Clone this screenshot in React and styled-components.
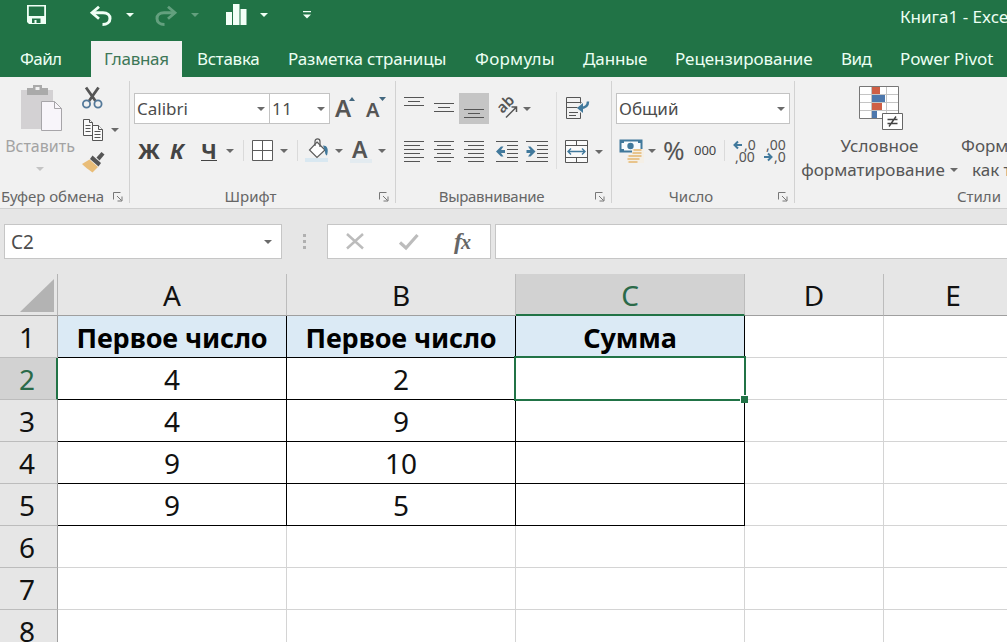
import React from "react";
import styled, { createGlobalStyle, css } from "styled-components";

const green = "#217346";
const blue = "#41799c";

const GlobalStyle = createGlobalStyle`
  * {
    box-sizing: border-box;
  }
  body {
    margin: 0;
    overflow: hidden;
    font-family: "Noto Sans", "Open Sans", sans-serif;
  }
  svg {
    display: block;
    flex: none;
    overflow: visible;
  }
`;

const Window = styled.div`
  width: 1007px;
  height: 642px;
  overflow: hidden;
  display: flex;
  flex-direction: column;
  background: #e6e6e6;
`;

const TitleBar = styled.header`
  height: 41px;
  flex: none;
  display: flex;
  align-items: flex-start;
  padding-left: 26px;
  background: ${green};
  color: #ecfff3;
`;

const QuickButton = styled.div`
  width: ${(props) => props.$w}px;
  padding-top: ${(props) => props.$top || 0}px;
  flex: none;
  opacity: ${(props) => (props.$disabled ? 0.32 : 1)};
`;

const BookName = styled.div`
  margin-left: auto;
  width: 107px;
  flex: none;
  overflow: hidden;
  white-space: nowrap;
  font-size: 17px;
  line-height: 33px;
`;

const Tabs = styled.nav`
  height: 36px;
  flex: none;
  display: grid;
  grid-template-columns: 91px 91px 91px 187px 108px 92px 166px 59px 122px;
  background: ${green};
`;

const Tab = styled.div`
  padding-left: ${(props) => props.$pad || 15}px;
  font-size: 17px;
  line-height: 36px;
  letter-spacing: ${(props) => props.$ls || 0}px;
  white-space: nowrap;
  color: #ecfff3;
  ${(props) =>
    props.$active &&
    css`
      background: #f1f1f1;
      color: #3d7757;
    `}
`;

const Ribbon = styled.section`
  height: 132px;
  flex: none;
  display: flex;
  background: #f1f1f1;
  border-bottom: 1px solid #cfcfcf;
`;

const Group = styled.div`
  width: ${(props) => props.$w}px;
  flex: none;
  display: grid;
  grid-template-rows: 108px 22px;
`;

const GroupLine = styled.div`
  width: 1px;
  height: 122px;
  margin-top: 4px;
  flex: none;
  background: #d2d2d2;
`;

const GroupFooter = styled.div`
  display: flex;
  align-items: center;
`;

const GroupLabel = styled.div`
  flex: 1;
  text-align: center;
  font-size: 15px;
  line-height: 22px;
  letter-spacing: ${(props) => props.$ls || 0}px;
  white-space: nowrap;
  color: #666;
`;

const LauncherSlot = styled.div`
  width: 24px;
  padding: 1px 0 0 8px;
`;

const ToolRows = styled.div`
  display: flex;
  flex-direction: column;
  padding-top: 16px;
`;

const ToolRow = styled.div`
  display: flex;
  align-items: center;
  height: 31px;
  margin-top: ${(props) => props.$mt || 0}px;
  padding-left: ${(props) => props.$pad || 0}px;
`;

const Tool = styled.div`
  width: ${(props) => props.$w}px;
  height: 31px;
  flex: none;
  display: flex;
  align-items: center;
  background: ${(props) => (props.$pressed ? "#c5c5c5" : "transparent")};
  padding-left: ${(props) => props.$pad || 0}px;
`;

const Letter = styled.span`
  font-size: 22px;
  line-height: 31px;
  font-weight: 700;
  color: #444;
  font-style: ${(props) => (props.$italic ? "italic" : "normal")};
  ${(props) =>
    props.$underline &&
    css`
      line-height: 20px;
      border-bottom: 1px solid #444;
    `}
`;

const FieldText = styled.span`
  flex: 1;
  font-size: ${(props) => props.$size || 17}px;
  letter-spacing: ${(props) => props.$ls || 0}px;
  color: #4c4c4c;
`;

const Field = styled.div`
  width: ${(props) => props.$w}px;
  height: 31px;
  flex: none;
  display: flex;
  align-items: center;
  padding: 0 4px 0 2px;
  background: #fff;
  border: 1px solid #c3c3c3;
  & + & {
    margin-left: -1px;
  }
`;

const ToolLine = styled.div`
  width: 1px;
  height: 21px;
  flex: none;
  background: #dadada;
`;

const PercentText = styled.span`
  font-size: 26px;
  line-height: 31px;
  color: #555;
`;

const ThousandText = styled.span`
  font-size: 13px;
  line-height: 31px;
  color: #444;
`;

const ClipboardBody = styled.div`
  display: grid;
  grid-template-columns: 82px 47px;
`;

const PasteButton = styled.div`
  display: flex;
  flex-direction: column;
  align-items: center;
  padding: 8px 0 0 1px;
  color: #a3a3a3;
`;

const PasteText = styled.div`
  font-size: 16px;
  line-height: 22px;
  margin-top: 3px;
  margin-right: 3px;
`;

const PasteCaret = styled.div`
  margin: 10px 3px 0 0;
`;

const ClipboardTools = styled.div`
  display: grid;
  grid-template-rows: 41px 24px 41px;
`;

const ClipboardRow = styled.div`
  display: flex;
  align-items: center;
  gap: 8px;
`;

const AlignBody = styled.div`
  display: grid;
  grid-template-columns: 160px 1px 1fr;
`;

const AlignLine = styled.div`
  height: 77px;
  margin-top: 15px;
  background: #dedede;
`;

const StyleButtons = styled.div`
  display: grid;
  grid-template-columns: 166px 150px;
`;

const BigButton = styled.div`
  display: flex;
  flex-direction: column;
  align-items: ${(props) => (props.$left ? "flex-start" : "center")};
  padding: 9px 0 0 ${(props) => (props.$left ? 0 : 3)}px;
  font-size: 17px;
  line-height: 24px;
  color: #565656;
  white-space: nowrap;
`;

const BigIcon = styled.div`
  height: 48px;
  padding-left: 3px;
`;

const BigCaption = styled.div`
  display: flex;
  align-items: center;
  gap: 5px;
  letter-spacing: ${(props) => props.$ls || 0}px;
  padding-left: ${(props) => props.$pad || 0}px;
`;

const FormulaBar = styled.section`
  height: 65px;
  flex: none;
  display: flex;
  align-items: flex-start;
  padding: 15px 0 0 4px;
`;

const NameBox = styled.div`
  width: 278px;
  height: 35px;
  flex: none;
  display: flex;
  align-items: center;
  padding: 0 9px 0 6px;
  background: #fff;
  border: 1px solid #c6c6c6;
`;

const Grip = styled.div`
  width: 45px;
  height: 35px;
  flex: none;
  display: flex;
  flex-direction: column;
  align-items: center;
  justify-content: center;
  gap: 3px;
  padding-right: 1px;
`;

const GripDot = styled.div`
  width: 3px;
  height: 3px;
  background: #b0b0b0;
`;

const FormulaButtons = styled.div`
  width: 164px;
  height: 35px;
  flex: none;
  display: flex;
  align-items: center;
  padding-left: 18px;
  background: #fff;
  border: 1px solid #c6c6c6;
`;

const FormulaInput = styled.div`
  width: 520px;
  height: 35px;
  flex: none;
  margin-left: 4px;
  background: #fff;
  border: 1px solid #c6c6c6;
`;

const FxText = styled.span`
  font: italic 700 24px/30px "Liberation Serif", serif;
  letter-spacing: -1px;
  color: #666;
  small {
    font-size: 20px;
  }
`;

const Sheet = styled.main`
  display: grid;
  grid-template-columns: 58px 229px 229px 229px 139px 139px;
  grid-auto-rows: 42px;
  background: #fff;
  font-size: 28px;
  line-height: 43px;
  text-align: center;
  color: #111;
`;

const Corner = styled.div`
  display: flex;
  justify-content: flex-end;
  padding: 5px 3px 0 0;
  background: #e6e6e6;
  border-right: 1px solid #b4b4b4;
  border-bottom: 1px solid #9f9f9f;
`;

const ColumnHead = styled.div`
  background: #e6e6e6;
  border-right: 1px solid #bcbcbc;
  border-bottom: 1px solid #9f9f9f;
  line-height: 42px;
  ${(props) =>
    props.$selected &&
    css`
      background: #d2d2d2;
      border-bottom: 2px solid ${green};
      color: #2b6a49;
    `}
`;

const RowHead = styled.div`
  background: #e6e6e6;
  border-right: 1px solid #9f9f9f;
  border-bottom: 1px solid #bcbcbc;
  padding-right: 3px;
  ${(props) =>
    props.$selected &&
    css`
      background: #d2d2d2;
      border-right: 2px solid ${green};
      padding-right: 2px;
      color: #2b6a49;
    `}
`;

const Cell = styled.div`
  position: relative;
  border-right: 1px solid ${(props) => (props.$table ? "#000" : "#d4d4d4")};
  border-bottom: 1px solid ${(props) => (props.$table ? "#000" : "#d4d4d4")};
  ${(props) =>
    props.$head &&
    css`
      background: #dbeaf5;
      color: #000;
      font-size: 27px;
      font-weight: 700;
      letter-spacing: -0.1px;
    `}
`;

const Selection = styled.div`
  position: absolute;
  left: -2px;
  top: -2px;
  width: 232px;
  height: 45px;
  border: 2px solid ${green};
  z-index: 1;
`;

const FillHandle = styled.div`
  position: absolute;
  right: -4px;
  bottom: -4px;
  width: 8px;
  height: 8px;
  background: ${green};
  border: solid #fff;
  border-width: 1px 0 0 1px;
`;

const Caret = ({ color = "#6a6a6a" }) => (
  <svg width="8" height="4" viewBox="0 0 8 4">
    <path d="M0 0h8L4 4z" fill={color} />
  </svg>
);

const Launcher = () => (
  <svg width="10" height="10" viewBox="0 0 10 10" fill="none" stroke="#777">
    <path d="M.5 7.5v-7h7M4 4l4.5 4.5M9 4.5V9H4.5" />
  </svg>
);

const SaveIcon = () => (
  <svg width="20" height="20" viewBox="0 0 20 20">
    <path
      d="M1 0h19v19H3l-2-2zM2.800 1.500v9.500h15.400V1.500zM6 13.500V18h2.500v-3h2v3h4v-4.500z"
      fill="#effff5"
      fillRule="evenodd"
    />
  </svg>
);

const UndoIcon = ({ flip }) => (
  <svg width="22" height="20" viewBox="0 0 22 20" fill="none" stroke="#effff5">
    <g transform={flip ? "translate(22 0) scale(-1 1)" : undefined}>
      <path d="M9 .8L2 6.8l7 6" strokeWidth="2.8" />
      <path d="M2.5 6.8H13c4.500 0 7 2.400 7 5.600 0 3.800-3 6-7.500 6" strokeWidth="3" />
    </g>
  </svg>
);

const BarsIcon = () => (
  <svg width="21" height="21" viewBox="0 0 21 21" fill="#f3fff7">
    <path d="M0 8h6v13H0zM7 0h6.500v21H7zM14.500 5h6v16h-6z" />
  </svg>
);

const CustomizeIcon = () => (
  <svg width="8" height="8" viewBox="0 0 8 8" fill="#effff5">
    <path d="M0 0h8v1.200H0zM0 3.500h8L4 7.500z" />
  </svg>
);

const PasteIcon = () => (
  <svg width="42" height="47" viewBox="0 0 42 47">
    <path d="M0 5h32v39H0z" fill="#d3d1d3" />
    <path d="M6 3h6V0h9v3h6v7H6zM14.500 2v3h4V2z" fill="#aaa" fillRule="evenodd" />
    <path d="M20.500 16.500h13l7 7v22h-20z" fill="#f8f5fa" stroke="#a7a5a9" />
    <path d="M33.500 16.500v7h7" fill="none" stroke="#a7a5a9" />
  </svg>
);

const CutIcon = () => (
  <svg width="21" height="22" viewBox="0 0 21 22" fill="none">
    <path d="M4 .5L13.500 14M16.500 .5L7 14" stroke="#555" strokeWidth="2.800" />
    <circle cx="4.500" cy="17" r="3.600" stroke="#54799a" strokeWidth="1.800" />
    <circle cx="16" cy="17" r="3.600" stroke="#54799a" strokeWidth="1.800" />
  </svg>
);

const CopyIcon = () => (
  <svg width="21" height="22" viewBox="0 0 21 22" fill="#fafafa" stroke="#555">
    <path d="M1.500 .5h6l3 3v13h-9z" />
    <path d="M7.500 .5v3h3M3.500 6.500h5M3.500 9.500h5M3.500 12.500h5" />
    <path d="M10.500 6.500h6l4 4v11h-10z" />
    <path d="M16.500 6.500v4h4M12.500 12.500h6M12.500 15.500h6M12.500 18.500h6" />
  </svg>
);

const BrushIcon = () => (
  <svg width="23" height="21" viewBox="0 0 23 21">
    <path d="M14.500 5.500l5-5.500 3 2.500-5 6z" fill="#555" />
    <path d="M10.500 3.500l8.500 7.500-2.500 3.500L8 7z" fill="#555" />
    <path d="M7.500 7.500l8.500 7.500-5.500 5.500C7 18 3 15 0 12z" fill="#e9bd78" />
  </svg>
);

const FontSizeIcon = ({ shrink }) => (
  <svg width="22" height="25" viewBox="0 0 22 25">
    <text
      x={shrink ? 1 : 0}
      y="21"
      fontSize={shrink ? 20 : 24}
      fontWeight="600"
      fill="#555"
    >
      A
    </text>
    <path d={shrink ? "M14 1h7l-3.500 4z" : "M14 5h6l-3-4z"} fill="#42677f" />
  </svg>
);

const BordersIcon = () => (
  <svg width="22" height="22" viewBox="0 0 22 22" fill="#fff" stroke="#5b5b5b">
    <path d="M.5 .5h20v20H.5zM10.500 .5v20M.5 10.500h20" />
  </svg>
);

const FillIcon = () => (
  <svg width="23" height="25" viewBox="0 0 23 25" fill="none">
    <path d="M0 20h23v4H0z" fill="#d9e8f1" />
    <path
      d="M12 4l8 8-8 7.500-7.500-7.500z"
      fill="#fff"
      stroke="#5b5b5b"
      strokeWidth="1.200"
    />
    <path d="M10 8V3.500c0-3.500 5-3.500 5 0V9" stroke="#5b5b5b" strokeWidth="1.200" />
    <path d="M18 7.500c4 0 6 3 4 10-1.500-.5-2-2-2-4.500z" fill={blue} />
  </svg>
);

const FontColorIcon = () => (
  <svg width="22" height="25" viewBox="0 0 22 25">
    <path d="M0 21h22v4H0z" fill="#e3ebf0" />
    <text x="2" y="20" fontSize="23" fontWeight="600" fill="#555">
      A
    </text>
  </svg>
);

// each entry is [x1, x2] of one stroke
const lineSets = {
  outer: [[0, 20], [4, 16], [0, 20]],
  left: [[0, 20], [0, 16], [0, 20], [0, 16], [0, 20], [0, 16]],
  center: [[0, 20], [3, 17], [0, 20], [3, 17], [0, 20], [3, 17]],
  right: [[0, 20], [4, 20], [0, 20], [4, 20], [0, 20], [4, 20]],
};

const LinesIcon = ({ set, top = 0 }) => (
  <svg width="20" height="23" viewBox="0 0 20 23" stroke="#555">
    {lineSets[set].map(([a, b], i) => (
      <path key={i} d={`M${a} ${top + i * 4 + 0.5}H${b}`} />
    ))}
  </svg>
);

const IndentIcon = ({ increase }) => (
  <svg width="23" height="23" viewBox="0 0 23 23">
    <path
      d="M0 .5h22M11 4.500h11M11 8.500h11M11 12.500h11M11 16.500h11M0 20.500h22"
      stroke="#555"
    />
    <path
      d="M0 10.500L5 5.500h2.500L5 9h4v3H5l2.500 3.500H5z"
      fill={blue}
      transform={increase ? "translate(9.500 0) scale(-1 1)" : undefined}
    />
  </svg>
);

const OrientationIcon = () => (
  <svg width="22" height="23" viewBox="0 0 22 23">
    <text
      fontSize="15"
      fontWeight="600"
      fill="#555"
      transform="translate(5.500 17) rotate(-45)"
    >
      ab
    </text>
    <path
      d="M9 20.500L19 10.500M14.500 10h5v5"
      fill="none"
      stroke="#555"
      strokeWidth="1.500"
    />
  </svg>
);

const WrapIcon = () => (
  <svg width="24" height="23" viewBox="0 0 24 23" fill="none">
    <path d="M14.500 6.500v-6H.5v21h14v-6" stroke="#555" />
    <path d="M.5 5.500h15M.5 10.500h11M3 15.500h9M3 18.500h7" stroke="#555" />
    <path d="M22 4.500c0 4-2.500 6.500-8 6.500" stroke={blue} strokeWidth="2.500" />
    <path d="M11 11L17 6v10z" fill={blue} />
  </svg>
);

const MergeIcon = () => (
  <svg width="24" height="24" viewBox="0 0 24 24" fill="none">
    <path
      d="M.5 .5h22v22H.5zM.5 5.500h22M.5 17.500h22M11.500 .5v5M11.500 17.500v5"
      stroke="#555"
      fill="#fafafa"
    />
    <path
      d="M3 11.500h17M6 8.500l-3 3 3 3M17 8.500l3 3-3 3"
      stroke={blue}
      strokeWidth="1.400"
    />
  </svg>
);

const CurrencyIcon = () => (
  <svg width="25" height="24" viewBox="0 0 25 24" fill="none">
    <path d="M1.500 1.500h21v11h-21z" fill="#f8fbfd" stroke={blue} strokeWidth="2" />
    <circle cx="11.500" cy="7" r="3.200" fill={blue} />
    <path d="M1 1h4v3H1zM19 1h4v3h-4zM1 10h4v3H1z" fill={blue} />
    <path d="M13 10h12v14H8v-8h5z" fill="#f4efe6" />
    <path
      d="M14.500 11h8M13.500 14h9M9.500 17h13M8.500 20h12M9.500 23h9"
      stroke="#e8c48c"
      strokeWidth="1.800"
    />
  </svg>
);

const DecimalIcon = ({ decrease }) => (
  <svg width="23" height="26" viewBox="0 0 23 26">
    <g fontSize="14" fill="#555">
      <text x={decrease ? 3 : 11} y="12">
        {decrease ? ",00" : ",0"}
      </text>
      <text x={decrease ? 11 : 2} y="24">
        {decrease ? ",0" : ",00"}
      </text>
    </g>
    <path
      d="M9 0H1.500M5 -3.500L1.500 0L5 3.500"
      fill="none"
      stroke={blue}
      strokeWidth="2"
      transform={decrease ? "translate(10 19) scale(-1 1)" : "translate(0 7)"}
    />
  </svg>
);

const ConditionalIcon = () => (
  <svg width="45" height="45" viewBox="0 0 45 45">
    <path d="M.5 .5h39v32H.5z" fill="#fff" />
    <path
      d="M.5 8.500h39M.5 16.500h39M.5 24.500h39M12.500 .5v32M27.500 .5v32"
      stroke="#c4c4c4"
    />
    <path d="M13 1h8v7h-8zM13 17h10v7H13z" fill="#cf5f45" />
    <path d="M13 9h13v7H13zM13 25h5v7h-5z" fill="#4d78ad" />
    <path d="M.5 .5h39v32H.5z" fill="none" stroke="#777" />
    <path d="M23.500 27.500h20v16h-20z" fill="#fff" stroke="#666" />
    <path
      d="M28.500 33.500h10M28.500 37.500h10M37 30.500l-7 10"
      stroke="#444"
      strokeWidth="1.400"
    />
  </svg>
);

const CancelIcon = () => (
  <svg width="18" height="17" viewBox="0 0 18 17" stroke="#bcbcbc" strokeWidth="2.500">
    <path d="M1 1l16 14.500M17 1L1 15.500" />
  </svg>
);

const AcceptIcon = () => (
  <svg width="20" height="16" viewBox="0 0 20 16" fill="none">
    <path d="M1 8.500l6 5.500L18.500 1" stroke="#bcbcbc" strokeWidth="3.200" />
  </svg>
);

const tabs = [
  { name: "Файл", pad: 20, ls: -0.6 },
  { name: "Главная", pad: 13, ls: -0.3, active: true },
  { name: "Вставка", ls: -0.3 },
  { name: "Разметка страницы", ls: -0.15 },
  { name: "Формулы", ls: 0.25 },
  { name: "Данные", ls: -0.1 },
  { name: "Рецензирование", ls: -0.05 },
  { name: "Вид", ls: -0.6 },
  { name: "Power Pivot", ls: -0.1 },
];

const columns = ["A", "B", "C", "D", "E"];
const rows = [
  ["Первое число", "Первое число", "Сумма"],
  ["4", "2", ""],
  ["4", "9", ""],
  ["9", "10", ""],
  ["9", "5", ""],
  [],
  [],
  [],
];

const Footer = ({ children, ls }) => (
  <GroupFooter>
    <GroupLabel $ls={ls}>{children}</GroupLabel>
    <LauncherSlot>
      <Launcher />
    </LauncherSlot>
  </GroupFooter>
);

const ClipboardGroup = () => (
  <Group $w={129}>
    <ClipboardBody>
      <PasteButton>
        <PasteIcon />
        <PasteText>Вставить</PasteText>
        <PasteCaret>
          <Caret color="#c4c4c4" />
        </PasteCaret>
      </PasteButton>
      <ClipboardTools>
        <ClipboardRow>
          <CutIcon />
        </ClipboardRow>
        <ClipboardRow>
          <CopyIcon />
          <Caret />
        </ClipboardRow>
        <ClipboardRow>
          <BrushIcon />
        </ClipboardRow>
      </ClipboardTools>
    </ClipboardBody>
    <Footer ls={-0.05}>Буфер обмена</Footer>
  </Group>
);

const FontGroup = () => (
  <Group $w={265}>
    <ToolRows>
      <ToolRow $pad={4}>
        <Field $w={136}>
          <FieldText>Calibri</FieldText>
          <Caret />
        </Field>
        <Field $w={61}>
          <FieldText $size={17} $ls={0.5}>
            11
          </FieldText>
          <Caret />
        </Field>
        <Tool $w={30} $pad={5}>
          <FontSizeIcon />
        </Tool>
        <Tool $w={24} $pad={5}>
          <FontSizeIcon shrink />
        </Tool>
      </ToolRow>
      <ToolRow $mt={11} $pad={8}>
        <Tool $w={32}>
          <Letter>Ж</Letter>
        </Tool>
        <Tool $w={31}>
          <Letter $italic>К</Letter>
        </Tool>
        <Tool $w={25}>
          <Letter $underline>Ч</Letter>
        </Tool>
        <Tool $w={17}>
          <Caret />
        </Tool>
        <ToolLine />
        <Tool $w={36} $pad={8}>
          <BordersIcon />
        </Tool>
        <Tool $w={17}>
          <Caret />
        </Tool>
        <ToolLine />
        <Tool $w={37} $pad={7}>
          <FillIcon />
        </Tool>
        <Tool $w={15}>
          <Caret />
        </Tool>
        <Tool $w={28}>
          <FontColorIcon />
        </Tool>
        <Caret />
      </ToolRow>
    </ToolRows>
    <Footer>Шрифт</Footer>
  </Group>
);

const AlignGroup = () => (
  <Group $w={215}>
    <AlignBody>
      <ToolRows>
        <ToolRow $pad={8}>
          <Tool $w={30}>
            <LinesIcon set="outer" />
          </Tool>
          <Tool $w={25}>
            <LinesIcon set="outer" top={6} />
          </Tool>
          <Tool $w={30} $pad={5} $pressed>
            <LinesIcon set="outer" top={12} />
          </Tool>
          <Tool $w={34} $pad={8}>
            <OrientationIcon />
          </Tool>
          <Caret />
        </ToolRow>
        <ToolRow $mt={13} $pad={8}>
          <Tool $w={30}>
            <LinesIcon set="left" />
          </Tool>
          <Tool $w={30}>
            <LinesIcon set="center" />
          </Tool>
          <Tool $w={32}>
            <LinesIcon set="right" />
          </Tool>
          <Tool $w={30}>
            <IndentIcon />
          </Tool>
          <Tool $w={23}>
            <IndentIcon increase />
          </Tool>
        </ToolRow>
      </ToolRows>
      <AlignLine />
      <ToolRows>
        <ToolRow $pad={9}>
          <WrapIcon />
        </ToolRow>
        <ToolRow $mt={12} $pad={8}>
          <Tool $w={30}>
            <MergeIcon />
          </Tool>
          <Caret />
        </ToolRow>
      </ToolRows>
    </AlignBody>
    <Footer ls={-0.3}>Выравнивание</Footer>
  </Group>
);

const NumberGroup = () => (
  <Group $w={182}>
    <ToolRows>
      <ToolRow $pad={4}>
        <Field $w={174}>
          <FieldText>Общий</FieldText>
          <Caret />
        </Field>
      </ToolRow>
      <ToolRow $mt={11} $pad={7}>
        <Tool $w={29}>
          <CurrencyIcon />
        </Tool>
        <Tool $w={15}>
          <Caret />
        </Tool>
        <Tool $w={31}>
          <PercentText>%</PercentText>
        </Tool>
        <Tool $w={30}>
          <ThousandText>000</ThousandText>
        </Tool>
        <ToolLine />
        <Tool $w={38} $pad={8}>
          <DecimalIcon />
        </Tool>
        <DecimalIcon decrease />
      </ToolRow>
    </ToolRows>
    <Footer>Число</Footer>
  </Group>
);

const StylesGroup = () => (
  <Group $w={368}>
    <StyleButtons>
      <BigButton>
        <BigIcon>
          <ConditionalIcon />
        </BigIcon>
        <BigCaption $ls={0.1}>Условное</BigCaption>
        <BigCaption>
          форматирование
          <Caret />
        </BigCaption>
      </BigButton>
      <BigButton $left>
        <BigIcon />
        <BigCaption>Форматировать</BigCaption>
        <BigCaption $pad={11}>как таблицу</BigCaption>
      </BigButton>
    </StyleButtons>
    <GroupFooter>
      <GroupLabel>Стили</GroupLabel>
    </GroupFooter>
  </Group>
);

const SheetRow = ({ values, index }) => (
  <>
    <RowHead $selected={index === 1}>{index + 1}</RowHead>
    {columns.map((name, col) => {
      const table = index < 5 && col < 3;
      return (
        <Cell key={name} $table={table} $head={table && index === 0}>
          {values[col]}
          {index === 1 && name === "C" && (
            <Selection>
              <FillHandle />
            </Selection>
          )}
        </Cell>
      );
    })}
  </>
);

const App = () => (
  <>
    <GlobalStyle />
    <Window>
      <TitleBar>
        <QuickButton $w={64} $top={5}>
          <SaveIcon />
        </QuickButton>
        <QuickButton $w={36} $top={6}>
          <UndoIcon />
        </QuickButton>
        <QuickButton $w={29} $top={13}>
          <Caret color="#effff5" />
        </QuickButton>
        <QuickButton $w={36} $top={6} $disabled>
          <UndoIcon flip />
        </QuickButton>
        <QuickButton $w={35} $top={13} $disabled>
          <Caret color="#effff5" />
        </QuickButton>
        <QuickButton $w={34} $top={4}>
          <BarsIcon />
        </QuickButton>
        <QuickButton $w={43} $top={13}>
          <Caret color="#effff5" />
        </QuickButton>
        <QuickButton $w={8} $top={11}>
          <CustomizeIcon />
        </QuickButton>
        <BookName>Книга1 - Excel</BookName>
      </TitleBar>
      <Tabs>
        {tabs.map((tab) => (
          <Tab key={tab.name} $pad={tab.pad} $ls={tab.ls} $active={tab.active}>
            {tab.name}
          </Tab>
        ))}
      </Tabs>
      <Ribbon>
        <ClipboardGroup />
        <GroupLine />
        <FontGroup />
        <GroupLine />
        <AlignGroup />
        <GroupLine />
        <NumberGroup />
        <GroupLine />
        <StylesGroup />
      </Ribbon>
      <FormulaBar>
        <NameBox>
          <FieldText $size={19}>C2</FieldText>
          <Caret />
        </NameBox>
        <Grip>
          <GripDot />
          <GripDot />
          <GripDot />
        </Grip>
        <FormulaButtons>
          <Tool $w={53}>
            <CancelIcon />
          </Tool>
          <Tool $w={55}>
            <AcceptIcon />
          </Tool>
          <FxText>
            f<small>x</small>
          </FxText>
        </FormulaButtons>
        <FormulaInput />
      </FormulaBar>
      <Sheet>
        <Corner>
          <svg width="34" height="34" viewBox="0 0 34 34">
            <path d="M34 0v33H0z" fill="#b3b3b3" />
          </svg>
        </Corner>
        {columns.map((name) => (
          <ColumnHead key={name} $selected={name === "C"}>
            {name}
          </ColumnHead>
        ))}
        {rows.map((values, i) => (
          <SheetRow key={i} values={values} index={i} />
        ))}
      </Sheet>
    </Window>
  </>
);

export default App;
